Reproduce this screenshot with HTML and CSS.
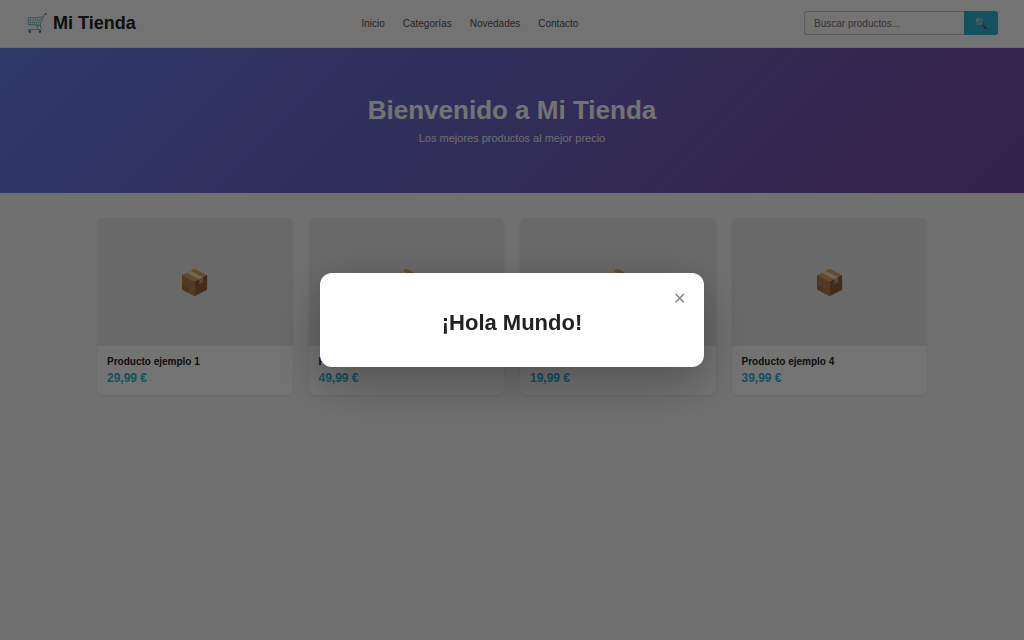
FILE: index.html
```html
<!DOCTYPE html>
<html lang="es">
<head>
    <meta charset="UTF-8">
    <meta name="viewport" content="width=device-width, initial-scale=1.0">
    <title>Mi Tienda</title>
    <link rel="stylesheet" href="styles.css">
</head>
<body>
    <header class="header">
        <div class="logo">🛒 Mi Tienda</div>
        <nav class="nav">
            <a href="#">Inicio</a>
            <a href="#">Categorías</a>
            <a href="#">Novedades</a>
            <a href="#">Contacto</a>
        </nav>
        <form class="search">
            <input type="text" placeholder="Buscar productos..." aria-label="Buscar productos">
            <button type="button" aria-label="Buscar">🔍</button>
        </form>
    </header>

    <section class="hero">
        <h1>Bienvenido a Mi Tienda</h1>
        <p>Los mejores productos al mejor precio</p>
    </section>

    <main class="products">
        <article class="card">
            <div class="card-image">📦</div>
            <div class="card-info">
                <h3>Producto ejemplo 1</h3>
                <p class="price">29,99 €</p>
            </div>
        </article>
        <article class="card">
            <div class="card-image">📦</div>
            <div class="card-info">
                <h3>Producto ejemplo 2</h3>
                <p class="price">49,99 €</p>
            </div>
        </article>
        <article class="card">
            <div class="card-image">📦</div>
            <div class="card-info">
                <h3>Producto ejemplo 3</h3>
                <p class="price">19,99 €</p>
            </div>
        </article>
        <article class="card">
            <div class="card-image">📦</div>
            <div class="card-info">
                <h3>Producto ejemplo 4</h3>
                <p class="price">39,99 €</p>
            </div>
        </article>
    </main>

    <!-- Popup -->
    <div class="overlay">
        <div class="popup" role="dialog" aria-modal="true" aria-labelledby="popup-title">
            <button type="button" class="popup-close" aria-label="Cerrar">✕</button>
            <h2 id="popup-title">¡Hola Mundo!</h2>
        </div>
    </div>
</body>
</html>
```
FILE: styles.css
```css
* {
    margin: 0;
    padding: 0;
    box-sizing: border-box;
}

body {
    font-family: "Liberation Sans", Arial, sans-serif;
    background: #f8f8f8;
    color: #222;
}

/* Header */
.header {
    display: flex;
    justify-content: space-between;
    align-items: center;
    padding: 11px 26px 12px;
    background: #fff;
    border-bottom: 1px solid #e8e8e8;
}

.logo {
    font-size: 18px;
    font-weight: bold;
    line-height: 20px;
}

.nav {
    display: flex;
    gap: 18px;
}

.nav a {
    color: #555;
    font-size: 10px;
    text-decoration: none;
}

.search {
    display: flex;
    height: 24px;
}

.search input {
    width: 160px;
    padding: 0 9px;
    border: 1px solid #ccc;
    border-right: none;
    border-radius: 3px 0 0 3px;
    background: #fff;
    font-family: inherit;
    font-size: 10px;
}

.search input::placeholder {
    color: #757575;
}

.search button {
    width: 34px;
    border: none;
    border-radius: 0 3px 3px 0;
    background: #2bb5d0;
    font-size: 11px;
    cursor: pointer;
}

/* Hero */
.hero {
    padding: 48px 26px;
    background: linear-gradient(135deg, #667eea, #764ba2);
    color: #fff;
    text-align: center;
}

.hero h1 {
    margin-bottom: 8px;
    font-size: 26px;
    line-height: 28px;
}

.hero p {
    font-size: 11px;
    line-height: 13px;
    opacity: 0.9;
}

/* Products */
.products {
    display: grid;
    grid-template-columns: repeat(4, 1fr);
    gap: 16px;
    max-width: 882px;
    margin: 0 auto;
    padding: 25px 26px;
}

.card {
    overflow: hidden;
    border-radius: 6px;
    background: #fff;
    box-shadow: 0 1px 3px rgba(0, 0, 0, 0.08);
}

.card-image {
    display: flex;
    align-items: center;
    justify-content: center;
    height: 128px;
    background: #e8e8e8;
    font-size: 25px;
}

.card-info {
    padding: 10px;
}

.card h3 {
    margin-bottom: 3px;
    font-size: 10px;
    line-height: 12px;
}

.price {
    color: #2bb5d0;
    font-size: 12px;
    font-weight: bold;
    line-height: 14px;
}

/* Popup */
.overlay {
    position: fixed;
    inset: 0;
    display: flex;
    align-items: center;
    justify-content: center;
    background: rgba(0, 0, 0, 0.55);
}

.popup {
    position: relative;
    width: 90%;
    max-width: 384px;
    padding: 37px 32px 31px;
    border-radius: 12px;
    background: #fff;
    box-shadow: 0 16px 48px rgba(0, 0, 0, 0.3);
    text-align: center;
}

.popup h2 {
    font-size: 22px;
    line-height: 26px;
}

.popup-close {
    position: absolute;
    top: 13px;
    right: 13px;
    width: 24px;
    height: 24px;
    border: none;
    background: none;
    color: #888;
    font-size: 16px;
    cursor: pointer;
}
```
